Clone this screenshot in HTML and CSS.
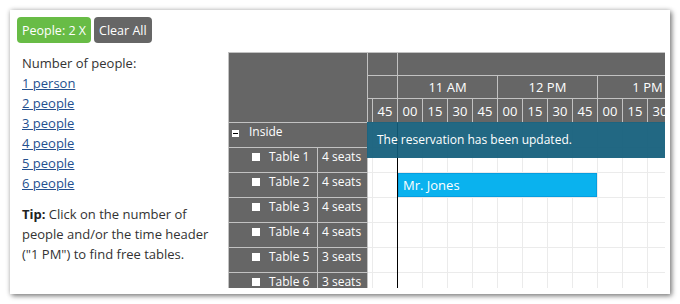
FILE: index.html
```html
<!DOCTYPE html>
<html lang="en">
<head>
    <meta charset="UTF-8">
    <title>Restaurant Table Reservation</title>
    <link rel="stylesheet" href="styles.css">
</head>
<body>
    <div class="frame">
        <div class="toolbar">
            <a class="btn btn-filter">People: 2 X</a>
            <a class="btn btn-clear">Clear All</a>
        </div>

        <div class="main">
            <div class="sidebar">
                <div>Number of people:</div>
                <a href="#">1 person</a>
                <a href="#">2 people</a>
                <a href="#">3 people</a>
                <a href="#">4 people</a>
                <a href="#">5 people</a>
                <a href="#">6 people</a>
                <p class="tip"><b>Tip:</b> Click on the number of people and/or the time header ("1 PM") to find free tables.</p>
            </div>

            <div class="scheduler">
                <div class="corner"></div>

                <div class="timeheader">
                    <div class="strip">
                        <div class="hrow">
                            <div class="hcell half"></div>
                            <div class="hcell rest"></div>
                        </div>
                        <div class="hrow">
                            <div class="hcell half"></div>
                            <div class="hcell hour">11 AM</div>
                            <div class="hcell hour">12 PM</div>
                            <div class="hcell hour">1 PM</div>
                        </div>
                        <div class="hrow">
                            <div class="hcell"></div>
                            <div class="hcell">45</div>
                            <div class="hcell">00</div>
                            <div class="hcell">15</div>
                            <div class="hcell">30</div>
                            <div class="hcell">45</div>
                            <div class="hcell">00</div>
                            <div class="hcell">15</div>
                            <div class="hcell">30</div>
                            <div class="hcell">45</div>
                            <div class="hcell">00</div>
                            <div class="hcell">15</div>
                            <div class="hcell">30</div>
                        </div>
                    </div>
                </div>

                <div class="rowheaders">
                    <div class="rh group"><span class="collapse"></span>Inside</div>
                    <div class="rh"><div class="rh-name"><span class="box"></span>Table 1</div><div class="rh-seats">4 seats</div></div>
                    <div class="rh"><div class="rh-name"><span class="box"></span>Table 2</div><div class="rh-seats">4 seats</div></div>
                    <div class="rh"><div class="rh-name"><span class="box"></span>Table 3</div><div class="rh-seats">4 seats</div></div>
                    <div class="rh"><div class="rh-name"><span class="box"></span>Table 4</div><div class="rh-seats">4 seats</div></div>
                    <div class="rh"><div class="rh-name"><span class="box"></span>Table 5</div><div class="rh-seats">3 seats</div></div>
                    <div class="rh"><div class="rh-name"><span class="box"></span>Table 6</div><div class="rh-seats">3 seats</div></div>
                </div>

                <div class="grid">
                    <div class="separator"></div>
                    <div class="event">Mr. Jones</div>
                    <div class="message">The reservation has been updated.</div>
                </div>
            </div>
        </div>
    </div>
</body>
</html>
```

FILE: styles.css
```css
body {
    margin: 0;
    background: #fff;
    font-family: "Open Sans", Arial, sans-serif;
    font-size: 13px;
    color: #333;
}
.frame {
    margin: 10px;
    width: 660px;
    height: 284px;
    box-sizing: border-box;
    padding: 7px 5px 0 7px;
    background: #fff;
    box-shadow: 2px 2px 5px rgba(0, 0, 0, 0.45), 0 0 5px rgba(0, 0, 0, 0.2);
    overflow: hidden;
}
.toolbar {
    display: flex;
    gap: 3px;
    height: 26px;
}
.btn {
    display: flex;
    align-items: center;
    padding: 0 5px;
    border-radius: 4px;
    color: #fff;
    font-size: 12.5px;
    cursor: pointer;
}
.btn-filter {
    background: #68bc46;
}
.btn-clear {
    background: #666;
}
.main {
    display: flex;
    margin-top: 9px;
}

/* left panel */
.sidebar {
    width: 206px;
    padding: 1px 0 0 5px;
    line-height: 20px;
}
.sidebar a {
    display: block;
    color: #24508f;
}
.tip {
    margin: 11px 0 0;
}
.tip b {
    color: #222;
}

/* scheduler */
.scheduler {
    width: 437px;
    height: 236px;
    box-sizing: border-box;
    border-left: 1px solid #c2c2c2;
    border-top: 1px solid #c2c2c2;
    display: grid;
    grid-template-columns: 139px 297px;
    grid-template-rows: 70px 165px;
    font-size: 12px;
    color: #fff;
    overflow: hidden;
}
.corner {
    background: #666;
    border-right: 1px solid #c2c2c2;
    border-bottom: 1px solid #c2c2c2;
}
.timeheader {
    background: #666;
    overflow: hidden;
    border-bottom: 1px solid #c2c2c2;
    font-size: 13px;
}
.strip {
    margin-left: -20px;
    width: 350px;
}
.hrow {
    display: flex;
    height: 23px;
    border-bottom: 1px solid #c2c2c2;
    box-sizing: border-box;
}
.hrow:last-child {
    border-bottom: none;
}
.hcell {
    flex: none;
    width: 25px;
    box-sizing: border-box;
    border-right: 1px solid #c2c2c2;
    display: flex;
    align-items: center;
    justify-content: center;
}
.hcell.half {
    width: 50px;
}
.hcell.hour {
    width: 100px;
}
.hcell.rest {
    width: 300px;
}
.rowheaders {
    background: #666;
    border-right: 1px solid #c2c2c2;
}
.rh {
    display: flex;
    height: 25px;
    box-sizing: border-box;
    border-bottom: 1px solid #c2c2c2;
    line-height: 18px;
}
.rh.group {
    padding-left: 3px;
    align-items: flex-start;
}
.collapse {
    position: relative;
    width: 7px;
    height: 7px;
    margin: 7px 10px 0 0;
    background: #fff;
}
.collapse::after {
    content: "";
    position: absolute;
    left: 1px;
    top: 3px;
    width: 5px;
    height: 1px;
    background: #000;
}
.rh-name {
    width: 89px;
    box-sizing: border-box;
    border-right: 1px solid #c2c2c2;
    padding-left: 23px;
    display: flex;
    align-items: flex-start;
}
.box {
    width: 8px;
    height: 8px;
    margin: 5px 9px 0 0;
    background: #fff;
}
.rh-seats {
    padding-left: 4px;
}
.grid {
    position: relative;
    background-color: #fff;
    background-image:
        linear-gradient(to right, transparent 24px, #ebebeb 24px),
        linear-gradient(to bottom, transparent 24px, #ebebeb 24px);
    background-size: 25px 100%, 100% 25px;
    background-position: -20px 0, 0 0;
}
.separator {
    position: absolute;
    left: 29px;
    top: 0;
    bottom: 0;
    width: 1px;
    background: #000;
}
.event {
    position: absolute;
    left: 30px;
    top: 50px;
    width: 199px;
    height: 24px;
    box-sizing: border-box;
    background: #0ab2ee;
    border: 1px solid #069ee0;
    padding-left: 4px;
    line-height: 22px;
    font-size: 13px;
}
.message {
    position: absolute;
    left: -1px;
    right: 0;
    top: -1px;
    height: 36px;
    box-sizing: border-box;
    padding-left: 10px;
    line-height: 36px;
    background: rgba(17, 92, 122, 0.93);
}
```
